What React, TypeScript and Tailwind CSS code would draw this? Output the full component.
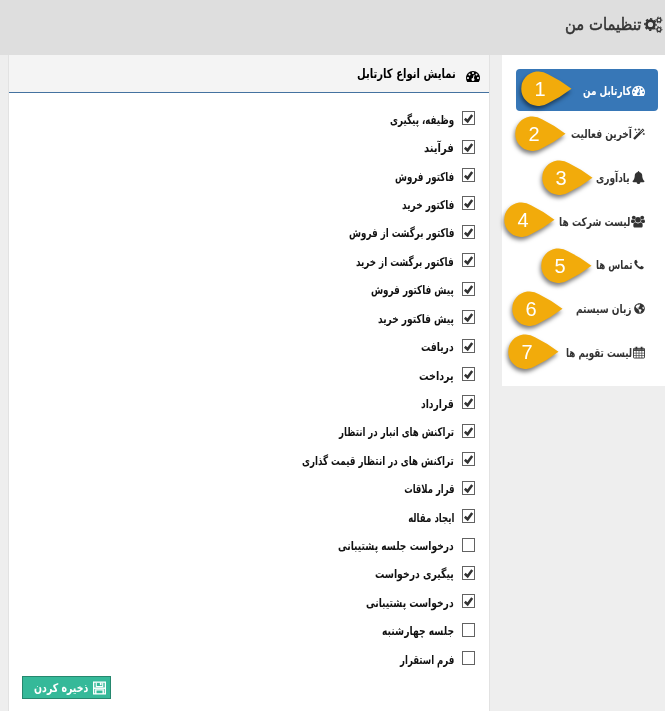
import { useLayoutEffect, useRef, useState } from "react";
import type { ReactNode } from "react";
import { FaGlobeAmericas } from "react-icons/fa";

/* A single line of text condensed horizontally to the given width. */
function Fit({ width, children, className = "" }: { width: number; children: string; className?: string }) {
  const ref = useRef<HTMLSpanElement>(null);
  const [scale, setScale] = useState(1);
  useLayoutEffect(() => {
    if (ref.current) setScale(width / ref.current.offsetWidth);
  }, [width]);
  return (
    <span className={"flex shrink-0 justify-start whitespace-nowrap " + className} style={{ width }}>
      <span ref={ref} className="block shrink-0 origin-right" style={{ transform: `scaleX(${scale})` }}>
        {children}
      </span>
    </span>
  );
}

function Glyph({ d, size }: { d: string; size: number }) {
  return (
    <svg viewBox="0 0 1792 1792" width={size} height={size} fill="currentColor" className="shrink-0">
      <path d={d} />
    </svg>
  );
}

const DASH =
  "M384 1152q0-53-37.5-90.5t-90.5-37.5-90.5 37.5-37.5 90.5 37.5 90.5 90.5 37.5 90.5-37.5 37.5-90.5zm192-448q0-53-37.5-90.5t-90.5-37.5-90.5 37.5-37.5 90.5 37.5 90.5 90.5 37.5 90.5-37.5 37.5-90.5zm428 481l101-382q6-26-7.5-48.5t-38.5-29.5-48 6.5-30 39.5l-101 382q-60 5-107 43.5t-63 98.5q-20 77 20 146t117 89 146-20 89-117q16-60-6-117t-72-91zm660-33q0-53-37.5-90.5t-90.5-37.5-90.5 37.5-37.5 90.5 37.5 90.5 90.5 37.5 90.5-37.5 37.5-90.5zm-640-640q0-53-37.5-90.5t-90.5-37.5-90.5 37.5-37.5 90.5 37.5 90.5 90.5 37.5 90.5-37.5 37.5-90.5zm448 192q0-53-37.5-90.5t-90.5-37.5-90.5 37.5-37.5 90.5 37.5 90.5 90.5 37.5 90.5-37.5 37.5-90.5zm320 448q0 261-141 483-19 29-54 29h-1402q-35 0-54-29-141-221-141-483 0-182 71-348t191-286 286-191 348-71 348 71 286 191 191 286 71 348z";
const BELL =
  "M1728 1408q0 52-38 90t-90 38h-448q0 106-75 181t-181 75-181-75-75-181h-448q-52 0-90-38t-38-90q50-42 91-88t85-119.5 74.5-158.5 50-206 19.5-260q0-152 117-282.5t307-158.5q-8-19-8-39 0-40 28-68t68-28 68 28 28 68q0 20-8 39 190 28 307 158.5t117 282.5q0 139 19.5 260t50 206 74.5 158.5 85 119.5 91 88z";
const PHONE =
  "M1600 1240q0 27-10 70.5t-21 68.5q-21 50-122 106-94 51-186 51-27 0-52.5-3.5t-57.5-12.5-47.5-14.5-55.5-20.5-49-18q-98-35-175-83-128-79-264.5-215.5t-215.5-264.5q-48-77-83-175-3-9-18-49t-20.5-55.5-14.5-47.5-12.5-57.5-3.5-52.5q0-92 51-186 56-101 106-122 25-11 68.5-21t70.5-10q14 0 21 3 18 6 53 76 11 19 30 54t35 63.5 31 53.5q3 4 17.5 25t21.5 35.5 7 28.5q0 20-28.5 50t-62 55-62 53-28.5 46q0 9 5 22.5t8.5 20.5 14 24 11.5 19q76 137 174 235t235 174q2 1 19 11.5t24 14 20.5 8.5 22.5 5q18 0 46-28.5t53-62 55-62 50-28.5q14 0 28.500 7t35.500 21.500 25 17.500q25 15 53.500 31t63.500 35 54 30q70 35 76 53 3 7 3 21z";

function CogsIcon() {
  return (
    <svg viewBox="0 0 19 18" width="19" height="18" fill="none" stroke="currentColor" className="shrink-0">
      <circle cx="6.500" cy="8.500" r="3.900" strokeWidth="2.600" />
      <circle cx="6.500" cy="8.500" r="5.600" strokeWidth="1.600" strokeDasharray="2.300 2.098" strokeDashoffset="1.150" />
      <circle cx="15" cy="4" r="1.950" strokeWidth="1.300" />
      <circle cx="15" cy="4" r="3" strokeWidth="1" strokeDasharray="1.500 1.642" strokeDashoffset="0.750" />
      <circle cx="15" cy="13.500" r="1.950" strokeWidth="1.300" />
      <circle cx="15" cy="13.500" r="3" strokeWidth="1" strokeDasharray="1.500 1.642" strokeDashoffset="0.750" />
    </svg>
  );
}

function WandIcon() {
  return (
    <svg viewBox="0 0 12 12" width="12" height="12" fill="none" stroke="currentColor" className="shrink-0">
      <path d="M1 11L7.600 4.400" strokeWidth="2.400" />
      <path d="M7.600 4.400L10.600 1.400" strokeWidth="2.400" />
      <path d="M7.700 4.300L10.200 1.800" stroke="white" strokeWidth="0.800" />
      <path d="M2.500 0.600v2M1.500 1.600h2M6 0.300v2.400M4.800 1.500h2.400M10.800 5v2M9.800 6h2M3 4.500h1.200" strokeWidth="0.800" />
    </svg>
  );
}

function UsersIcon() {
  return (
    <svg viewBox="0 0 14 13" width="14" height="13" fill="currentColor" className="shrink-0">
      <circle cx="2.800" cy="2.600" r="1.900" />
      <circle cx="11.200" cy="2.600" r="1.900" />
      <path d="M0 6.800C0 5 0.600 4.400 1.400 4.400C2.400 5 3.200 4.900 3.700 4.700C3.700 5.700 4 6.200 4.500 6.800C3.700 6.900 3 7.300 2.600 7.900H1.200C0.500 7.900 0 7.500 0 6.800ZM14 6.800C14 5 13.400 4.400 12.600 4.400C11.600 5 10.800 4.900 10.300 4.700C10.300 5.700 10 6.200 9.500 6.800C10.300 6.900 11 7.300 11.400 7.900H12.800C13.500 7.900 14 7.500 14 6.800Z" />
      <circle cx="7" cy="4.700" r="2.800" />
      <path d="M4.300 7.300C5.900 8.800 8.100 8.800 9.700 7.300C11.200 7.300 11.700 8.900 11.700 10.700C11.700 12 11 12.600 10 12.600H4C3 12.600 2.300 12 2.300 10.700C2.300 8.900 2.800 7.300 4.300 7.300Z" />
    </svg>
  );
}

function CalendarIcon() {
  return (
    <svg viewBox="0 0 13 13" width="12" height="13" fill="none" stroke="currentColor" className="shrink-0">
      <rect x="0.5" y="2" width="12" height="10.5" rx="0.8" />
      <path d="M0.5 3h12M0.5 4.300h12" />
      <path d="M3.500 4v8.500M6.500 4v8.500M9.500 4v8.500M0.500 7.200h12M0.500 9.800h12" strokeWidth="0.7" />
      <path d="M3.700 0.300v3M9.300 0.300v3" strokeWidth="1.9" />
    </svg>
  );
}

function SaveIcon() {
  return (
    <svg viewBox="0 0 14 14" width="13" height="14" fill="none" stroke="white" className="shrink-0">
      <rect x="0.700" y="0.700" width="12.600" height="12.600" strokeWidth="1.400" />
      <path d="M3.500 1v4.500h7V1" strokeWidth="1.200" />
      <path d="M8.300 1v3" strokeWidth="1.800" />
      <path d="M3 13.500V9h8v4.500" strokeWidth="1.500" />
      <path d="M1 7.200h12" strokeWidth="1.600" />
    </svg>
  );
}

function Pin({ n, className }: { n: number; className: string }) {
  return (
    <div className={"absolute h-9 w-[51px] drop-shadow-[-1px_3px_2px_rgba(0,0,0,0.5)] " + className}>
      <svg viewBox="0 0 51 36" width="51" height="36">
        <path d="M50.500 17.700Q39 26.500 27 32.200A17.300 17.300 0 1 1 27 3.200Q39 9 50.500 17.700Z" fill="#f2ab0b" />
      </svg>
      <span dir="ltr" className="absolute top-[6px] left-[13px] w-3 text-center font-['Liberation_Sans',sans-serif] text-[20px] leading-6 font-normal text-white">
        {n}
      </span>
    </div>
  );
}

type Item = { label: string; w: number; gap: string; icon: ReactNode; pin: string };
const menu: Item[] = [
  { label: "کارتابل من", w: 48, gap: "gap-[1px]", icon: <Glyph d={DASH} size={13} />, pin: "left-[5px] top-[2px]" },
  { label: "آخرین فعالیت", w: 61, gap: "gap-[1px]", icon: <WandIcon />, pin: "left-[-1px] top-[3px]" },
  { label: "یادآوری", w: 34, gap: "gap-[2px]", icon: <Glyph d={BELL} size={13} />, pin: "left-[26px] top-[4px]" },
  { label: "لیست شرکت ها", w: 71, gap: "gap-[1px]", icon: <UsersIcon />, pin: "left-[-12px] top-[2px]" },
  { label: "تماس ها", w: 37, gap: "gap-0", icon: <Glyph d={PHONE} size={12} />, pin: "left-[25px] top-[4px]" },
  { label: "زبان سیستم", w: 56, gap: "gap-[2px]", icon: <FaGlobeAmericas size={11} />, pin: "left-[-4px] top-[4px]" },
  { label: "لیست تقویم ها", w: 66, gap: "gap-[1px]", icon: <CalendarIcon />, pin: "left-[-8px] top-[3px]" },
];

const rows: [string, number, boolean][] = [
  ["وظیفه، پیگیری", 64, true],
  ["فرآیند", 30, true],
  ["فاکتور فروش", 59, true],
  ["فاکتور خرید", 52, true],
  ["فاکتور برگشت از فروش", 105, true],
  ["فاکتور برگشت از خرید", 98, true],
  ["پیش فاکتور فروش", 83, true],
  ["پیش فاکتور خرید", 76, true],
  ["دریافت", 33, true],
  ["پرداخت", 35, true],
  ["قرارداد", 33, true],
  ["تراکنش های انبار در انتظار", 115, true],
  ["تراکنش های در انتظار قیمت گذاری", 152, true],
  ["قرار ملاقات", 50, true],
  ["ایجاد مقاله", 46, true],
  ["درخواست جلسه پشتیبانی", 116, false],
  ["پیگیری درخواست", 79, true],
  ["درخواست پشتیبانی", 88, true],
  ["جلسه چهارشنبه", 72, false],
  ["فرم استقرار", 54, false],
];

function Checkbox({ checked }: { checked: boolean }) {
  return (
    <span className="flex h-[14px] w-[13px] shrink-0 items-center justify-center border border-[#626262] bg-white">
      {checked && (
        <svg viewBox="0 0 11 12" width="11" height="12" fill="none" stroke="#333" strokeWidth="2.500">
          <path d="M1.800 6.800L4.600 9.300L9.200 3" />
        </svg>
      )}
    </span>
  );
}

export default function App() {
  return (
    <div dir="rtl" className="flex h-[711px] w-[665px] flex-col overflow-hidden bg-[#eeeeee] font-['DejaVu_Sans',sans-serif] text-[#222]">
      <header className="flex h-[55px] shrink-0 items-center gap-[3px] bg-[#dedede] pr-[2px] pb-[5px] text-[#333]">
        <CogsIcon />
        <Fit width={76} className="text-[17px] [-webkit-text-stroke:0.5px_#333]">تنظیمات من</Fit>
      </header>
      <div className="flex min-h-0 flex-1 items-start gap-3">
        <nav className="flex h-[331px] w-[163px] shrink-0 flex-col gap-[1.7px] bg-white pt-[14px] pr-[7px] pl-[14px]">
          {menu.map((m, i) => (
            <div
              key={m.label}
              className={
                "relative flex h-[42px] shrink-0 items-center rounded-[4px] pr-[13px] text-[12px] font-bold " +
                m.gap +
                (i === 0 ? " bg-[#3777b7] text-white" : " text-[#333]")
              }
            >
              {m.icon}
              <Fit width={m.w} className="pt-px">{m.label}</Fit>
              <Pin n={i + 1} className={m.pin} />
            </div>
          ))}
        </nav>
        <main className="flex h-full w-[482px] shrink-0 flex-col border-x border-[#e2e2e2] bg-white">
          <div className="flex h-[38px] shrink-0 items-center gap-[10px] border-b border-[#4472a0] bg-[#f4f4f4] pr-[9px] text-black">
            <span className="pt-[5px]"><Glyph d={DASH} size={14} /></span>
            <Fit width={99} className="text-[13px] font-bold">نمایش انواع کارتابل</Fit>
          </div>
          <div className="flex flex-col pt-[11px] pr-[14px]">
            {rows.map(([label, w, checked]) => (
              <div key={label} className="flex h-[28.43px] items-center gap-2">
                <Checkbox checked={checked} />
                <Fit width={w} className="pt-[3px] text-[12px] font-bold text-[#111]">{label}</Fit>
              </div>
            ))}
          </div>
          <div className="flex justify-end pt-[4px] pl-[13px]">
            <button className="flex h-[23px] w-[89px] items-center gap-[5px] border border-[#26876e] bg-[#35b999] pr-[4px] text-white">
              <SaveIcon />
              <Fit width={54} className="text-[12px] font-bold">ذخیره کردن</Fit>
            </button>
          </div>
        </main>
      </div>
    </div>
  );
}
